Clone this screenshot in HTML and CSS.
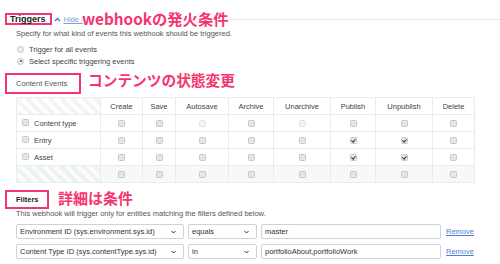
FILE: index.html
```html
<!DOCTYPE html>
<html lang="en">
<head>
    <meta charset="UTF-8">
    <title>Webhook triggers</title>
    <link rel="stylesheet" href="styles.css">
</head>
<body>
    <div class="page">
        <!-- Triggers -->
        <div class="section-head">
            <h2 class="tag tag-title">Triggers</h2>
            <svg class="chevron" width="7" height="5" viewBox="0 0 7 5"><polyline points="1,4 3.5,1.5 6,4" fill="none" stroke="#3c80cf" stroke-width="1.4"/></svg>
            <a class="hide-link" href="#">Hide se</a>
            <span class="rule"></span>
        </div>
        <p class="desc">Specify for what kind of events this webhook should be triggered.</p>
        <label class="radio"><span class="radio-dot"></span>Trigger for all events</label>
        <label class="radio"><span class="radio-dot on"></span>Select specific triggering events</label>

        <div class="tag tag-box">Content Events</div>

        <table class="events">
            <colgroup>
                <col style="width: 84px"><col style="width: 42px"><col style="width: 33px">
                <col style="width: 53px"><col style="width: 45px"><col style="width: 57px">
                <col style="width: 45px"><col style="width: 57px"><col style="width: 42px">
            </colgroup>
            <tr>
                <th class="striped"></th>
                <th>Create</th><th>Save</th><th>Autosave</th><th>Archive</th>
                <th>Unarchive</th><th>Publish</th><th>Unpublish</th><th>Delete</th>
            </tr>
            <tr>
                <td class="name"><span class="cb"></span>Content type</td>
                <td><span class="cb"></span></td><td><span class="cb"></span></td>
                <td><span class="cb off"></span></td><td><span class="cb"></span></td>
                <td><span class="cb off"></span></td><td><span class="cb"></span></td>
                <td><span class="cb"></span></td><td><span class="cb"></span></td>
            </tr>
            <tr>
                <td class="name"><span class="cb"></span>Entry</td>
                <td><span class="cb"></span></td><td><span class="cb"></span></td>
                <td><span class="cb"></span></td><td><span class="cb"></span></td>
                <td><span class="cb"></span></td><td><span class="cb on"></span></td>
                <td><span class="cb on"></span></td><td><span class="cb"></span></td>
            </tr>
            <tr>
                <td class="name"><span class="cb"></span>Asset</td>
                <td><span class="cb"></span></td><td><span class="cb"></span></td>
                <td><span class="cb"></span></td><td><span class="cb"></span></td>
                <td><span class="cb"></span></td><td><span class="cb on"></span></td>
                <td><span class="cb on"></span></td><td><span class="cb"></span></td>
            </tr>
            <tr class="all-row">
                <td class="striped"></td>
                <td><span class="cb"></span></td><td><span class="cb"></span></td>
                <td><span class="cb"></span></td><td><span class="cb"></span></td>
                <td><span class="cb"></span></td><td><span class="cb"></span></td>
                <td><span class="cb"></span></td><td><span class="cb"></span></td>
            </tr>
        </table>

        <!-- Filters -->
        <h2 class="tag tag-filters">Filters</h2>
        <p class="desc">This webhook will trigger only for entities matching the filters defined below.</p>

        <div class="filter-row">
            <div class="select select-field">Environment ID (sys.environment.sys.id)<svg width="5" height="4" viewBox="0 0 5 4"><polyline points="0.5,1 2.5,3 4.5,1" fill="none" stroke="#333" stroke-width="1"/></svg></div>
            <div class="select select-op">equals<svg width="5" height="4" viewBox="0 0 5 4"><polyline points="0.5,1 2.5,3 4.5,1" fill="none" stroke="#333" stroke-width="1"/></svg></div>
            <div class="text-input">master</div>
            <a class="remove" href="#">Remove</a>
        </div>
        <div class="filter-row">
            <div class="select select-field">Content Type ID (sys.contentType.sys.id)<svg width="5" height="4" viewBox="0 0 5 4"><polyline points="0.5,1 2.5,3 4.5,1" fill="none" stroke="#333" stroke-width="1"/></svg></div>
            <div class="select select-op">in<svg width="5" height="4" viewBox="0 0 5 4"><polyline points="0.5,1 2.5,3 4.5,1" fill="none" stroke="#333" stroke-width="1"/></svg></div>
            <div class="text-input">portfolioAbout,portfolioWork</div>
            <a class="remove" href="#">Remove</a>
        </div>

        <!-- annotations drawn over the screenshot -->
        <span class="note note-triggers">webhookの発火条件</span>
        <span class="note note-events">コンテンツの状態変更</span>
        <span class="note note-filters">詳細は条件</span>
    </div>
</body>
</html>
```

FILE: styles.css
```css
/* Basic Styling */
body {
    margin: 0;
    background-color: #fff;
    font-family: "Liberation Sans", Arial, sans-serif;
    font-size: 7.5px;
    color: #444;
}

.page {
    position: relative;
    padding: 13px 0 0 16px;
}

.tag {
    margin: 0 0 0 -11px;
    border: 2px solid #f5356f;
    font-weight: normal;
}

.section-head {
    display: flex;
    align-items: center;
    height: 12px;
}

.tag-title {
    padding: 0 4px 0 3px;
    line-height: 8px;
    font-size: 9px;
    font-weight: bold;
    color: #222;
}

.chevron {
    margin-left: 2px;
}

.hide-link {
    margin-left: 3px;
    color: #7d9fd6;
    font-size: 7.5px;
}

.rule {
    flex: 1;
    margin-left: 10px;
    border-top: 1px solid #e9e9e9;
}

.desc {
    margin: 4px 0 0;
    line-height: 10px;
    color: #555;
}

.radio {
    display: flex;
    align-items: center;
    height: 12px;
    margin-left: 1px;
    color: #444;
}

.radio:first-of-type {
    margin-top: 4px;
}

.radio-dot {
    position: relative;
    width: 5px;
    height: 5px;
    margin-right: 5px;
    border: 1px solid #c4c4c4;
    border-radius: 50%;
    background-color: #ededed;
}

.radio-dot.on::after {
    content: "";
    position: absolute;
    left: 1.5px;
    top: 1.5px;
    width: 2px;
    height: 2px;
    border-radius: 50%;
    background-color: #555;
}

.tag-box {
    width: 63px;
    margin-top: 6px;
    padding: 0 0 0 9px;
    line-height: 17px;
    color: #555;
}

/* events table */
.events {
    margin-top: 3px;
    border-collapse: collapse;
    table-layout: fixed;
    width: 458px;
}

.events th,
.events td {
    height: 16px;
    padding: 0;
    border: 1px solid #e7eced;
    text-align: center;
    vertical-align: middle;
}

.events th {
    font-weight: normal;
    color: #444;
}

.events td.name {
    padding-left: 5px;
    text-align: left;
    color: #444;
}

.events .striped {
    background: repeating-linear-gradient(45deg, #f1f4f5 0, #f1f4f5 4px, #fff 4px, #fff 8px);
}

.all-row td {
    background-color: #f6f8f9;
}

.all-row td.striped {
    background: repeating-linear-gradient(45deg, #eef1f2 0, #eef1f2 4px, #fbfcfc 4px, #fbfcfc 8px);
}

.cb {
    position: relative;
    display: inline-block;
    width: 5px;
    height: 5px;
    border: 1px solid #c7c7c7;
    border-radius: 1.5px;
    background-color: #e6e6e6;
    vertical-align: middle;
}

.name .cb {
    margin-right: 5px;
    position: relative;
    top: -1px;
}

.cb.off {
    border-color: #e4e4e4;
    background-color: #f3f3f3;
}

.cb.on::after {
    content: "";
    position: absolute;
    left: 1.5px;
    top: 0;
    width: 1.5px;
    height: 3px;
    border: solid #333;
    border-width: 0 1px 1px 0;
    transform: rotate(40deg);
}

/* filters */
.tag-filters {
    width: 31px;
    margin-top: 7px;
    padding: 0 0 0 9px;
    line-height: 15px;
    font-size: 7.5px;
    font-weight: bold;
    color: #222;
}

.tag-filters + .desc {
    margin-top: 0;
}

.filter-row {
    display: flex;
    align-items: center;
    gap: 4px;
    margin-top: 5px;
}

.filter-row + .filter-row {
    margin-top: 5px;
}

.select,
.text-input {
    display: flex;
    align-items: center;
    box-sizing: border-box;
    height: 15px;
    padding: 0 7px 0 3px;
    border: 1px solid #cdd4d8;
    border-radius: 2px;
    color: #333;
}

.select {
    justify-content: space-between;
}

.select-field {
    width: 168px;
}

.select-op {
    width: 69px;
}

.text-input {
    width: 180px;
}

.remove {
    margin-left: 1px;
    color: #4d82d2;
}

/* annotations */
.note {
    position: absolute;
    line-height: 1;
    font-family: "Noto Sans CJK JP", sans-serif;
    font-weight: bold;
    color: #f5356f;
    -webkit-text-stroke: 3px #fff;
    paint-order: stroke fill;
    white-space: nowrap;
}

.note-triggers {
    left: 82px;
    top: 11px;
    font-size: 15.3px;
}

.note-events {
    left: 88px;
    top: 73px;
    font-size: 14.7px;
}

.note-filters {
    left: 58px;
    top: 190px;
    font-size: 15px;
}
```
